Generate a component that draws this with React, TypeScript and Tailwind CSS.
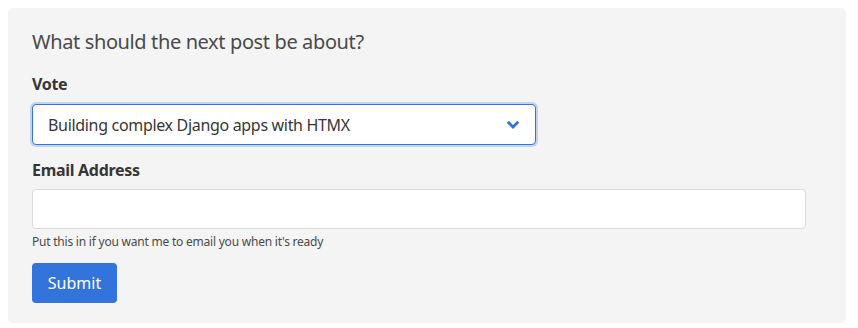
import React from "react";

export default function App() {
  return (
    <div className="bg-white w-[858px] h-[328px] p-2" style={{ fontFamily: '"Noto Sans", sans-serif' }}>
      <div className="bg-[#f4f4f4] rounded-[5px] h-[315px] w-[838px] pl-6 pt-[20px] text-[#363636]">
        <h2 className="text-[20px] leading-[28px] tracking-[-0.38px] text-[#4a4a4a]">What should the next post be about?</h2>
        <div className="mt-[16px] text-[16px] font-bold leading-6 tracking-[-0.3px]">Vote</div>
        <div className="mt-[8px] relative w-[504px] h-[41px] rounded-[4px] border border-[#3273dc] bg-white shadow-[0_0_0_2px_rgba(50,115,220,0.25)] flex items-center pl-[15px]">
          <span className="text-[16px] text-[#363636] tracking-[-0.32px]">Building complex Django apps with HTMX</span>
          <svg className="absolute right-[16px] top-[16px]" width="12" height="8" viewBox="0 0 12 8">
            <path d="M1.8 1.8 L6 6 L10.2 1.8" fill="none" stroke="#3273dc" strokeWidth="2.8" strokeLinecap="square" />
          </svg>
        </div>
        <div className="mt-[13px] text-[16px] font-bold leading-6 tracking-[-0.3px]">Email Address</div>
        <div className="mt-[7px] w-[774px] h-[40px] rounded-[4px] border border-[#dbdbdb] bg-white" />
        <div className="mt-[4px] text-[12px] leading-[18px] tracking-[-0.22px] text-[#4a4a4a]">Put this in if you want me to email you when it's ready</div>
        <button className="mt-[12px] w-[85px] h-[40px] rounded-[4px] bg-[#3273dc] text-white text-[16px]">Submit</button>
      </div>
    </div>
  );
}
